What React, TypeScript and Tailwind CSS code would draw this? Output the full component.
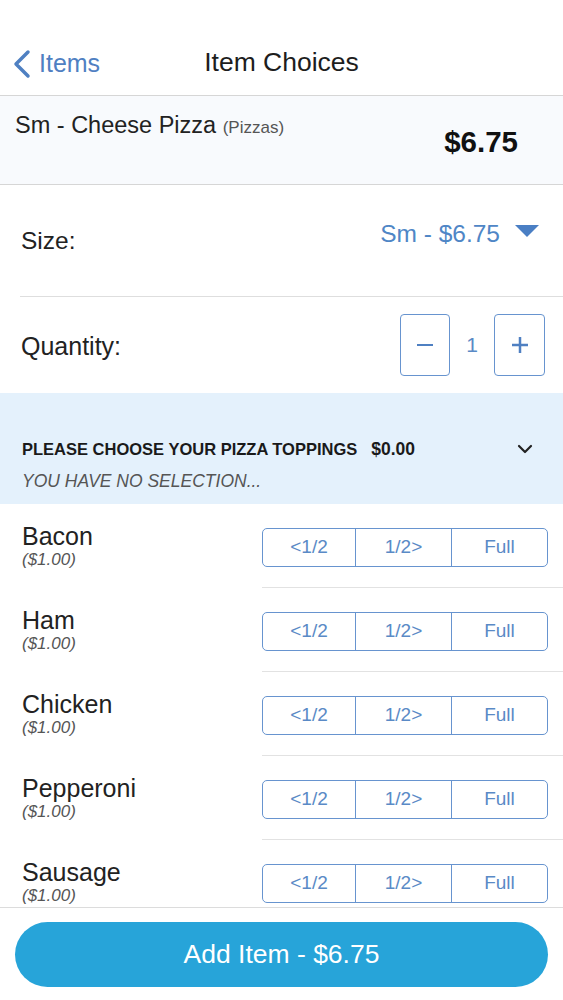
import React from "react"

const toppings = ["Bacon", "Ham", "Chicken", "Pepperoni", "Sausage"]

function Segments() {
  return (
    <div className="flex h-[41px] w-[286px] rounded-[5px] border-[1.5px] border-[#6794cf] text-[19px] text-[#5a8ac6]">
      <div className="flex w-[93px] items-center justify-center border-r-[1.5px] border-[#6794cf]">&lt;1/2</div>
      <div className="flex w-[96px] items-center justify-center border-r-[1.5px] border-[#6794cf]">1/2&gt;</div>
      <div className="flex flex-1 items-center justify-center">Full</div>
    </div>
  )
}

export default function App() {
  return (
    <div className="flex h-[1000px] flex-col overflow-hidden bg-white text-[#222] [font-family:'Liberation_Sans',Arial,sans-serif]">
      <div className="flex-1 overflow-hidden">
        {/* nav */}
        <div className="relative flex h-[96px] items-center border-b border-[#d6d6d6] pt-[32px]">
          <div className="flex items-center pl-[12px] text-[25px] text-[#4f80c2]">
            <svg width="20" height="30" viewBox="0 0 20 30" className="mr-[7px]">
              <polyline points="16,3 4,15 16,27" fill="none" stroke="#4f80c2" strokeWidth="3.5" strokeLinecap="round" strokeLinejoin="round" />
            </svg>
            Items
          </div>
          <div className="absolute left-0 right-0 bottom-[12px] text-center text-[26.5px] font-medium text-[#1d1d1d]">Item Choices</div>
        </div>

        {/* item summary */}
        <div className="flex h-[89px] border-b border-[#d6d6d6] bg-[#f8fafd] pl-[15px] pr-[45px]">
          <div className="pt-[12px] text-[23.5px]">
            Sm - Cheese Pizza <span className="text-[17px] text-[#555]">(Pizzas)</span>
          </div>
          <div className="ml-auto pt-[24px] text-[29.5px] font-bold text-[#111]">$6.75</div>
        </div>

        {/* size */}
        <div className="flex h-[111px] items-center pl-[21px]">
          <div className="pt-[2px] text-[24.5px]">Size:</div>
          <div className="ml-auto flex items-center pr-[24px] pb-[12px] text-[24.5px] text-[#4f86c6]">
            Sm - $6.75
            <svg width="24" height="13" viewBox="0 0 24 13" className="ml-[15px] mb-[6px]">
              <polygon points="0,0 24,0 12,12" fill="#4a7fc4" />
            </svg>
          </div>
        </div>

        {/* quantity */}
        <div className="ml-[20px] flex h-[97px] items-center border-t border-[#dedede] pr-[18px]">
          <div className="pl-[1px] pt-[3px] text-[25px]">Quantity:</div>
          <div className="ml-auto flex items-center">
            <div className="flex h-[62px] w-[50px] items-center justify-center rounded-[4px] border-[1.5px] border-[#6794cf]">
              <div className="h-[2.5px] w-[16px] bg-[#4f80c2]" />
            </div>
            <div className="w-[44px] text-center text-[21px] text-[#5a8ac6]">1</div>
            <div className="flex h-[62px] w-[51px] items-center justify-center rounded-[4px] border-[1.5px] border-[#6794cf]">
              <svg width="18" height="18" viewBox="0 0 18 18">
                <path d="M9 1v16M1 9h16" stroke="#4f80c2" strokeWidth="2.5" />
              </svg>
            </div>
          </div>
        </div>

        {/* toppings header */}
        <div className="flex h-[111px] flex-col justify-end bg-[#e4f1fc] pb-[10px] pl-[22px] pr-[30px]">
          <div className="flex items-center">
            <div className="text-[16.5px] font-bold text-[#1a1a1a]">
              PLEASE CHOOSE YOUR PIZZA TOPPINGS<span className="ml-[14px] text-[17.5px]">$0.00</span>
            </div>
            <svg width="16" height="10" viewBox="0 0 16 10" className="ml-auto">
              <polyline points="2,2 8,8 14,2" fill="none" stroke="#222" strokeWidth="2.2" strokeLinecap="round" strokeLinejoin="round" />
            </svg>
          </div>
          <div className="mt-[6px] text-[17.5px] italic text-[#555]">YOU HAVE NO SELECTION...</div>
        </div>

        {/* toppings list */}
        <div>
          {toppings.map((t) => (
            <div key={t} className="flex h-[84px] pt-[24px] pl-[22px]">
              <div className="-mt-[6px] flex flex-col">
                <div className="text-[25px] leading-[28px]">{t}</div>
                <div className="text-[17px] italic leading-[19px] text-[#555]">($1.00)</div>
              </div>
              <div className="ml-auto flex w-[301px] flex-col">
                <Segments />
                <div className="mt-[20px] h-px w-full bg-[#e2e2e2]" />
              </div>
            </div>
          ))}
        </div>
      </div>

      {/* footer */}
      <div className="h-[93px] border-t border-[#dcdcdc] px-[15px] pt-[14px]">
        <div className="flex h-[65px] items-center justify-center rounded-full bg-[#27a4d9] text-[26.5px] font-medium text-white">
          Add Item - $6.75
        </div>
      </div>
    </div>
  )
}
